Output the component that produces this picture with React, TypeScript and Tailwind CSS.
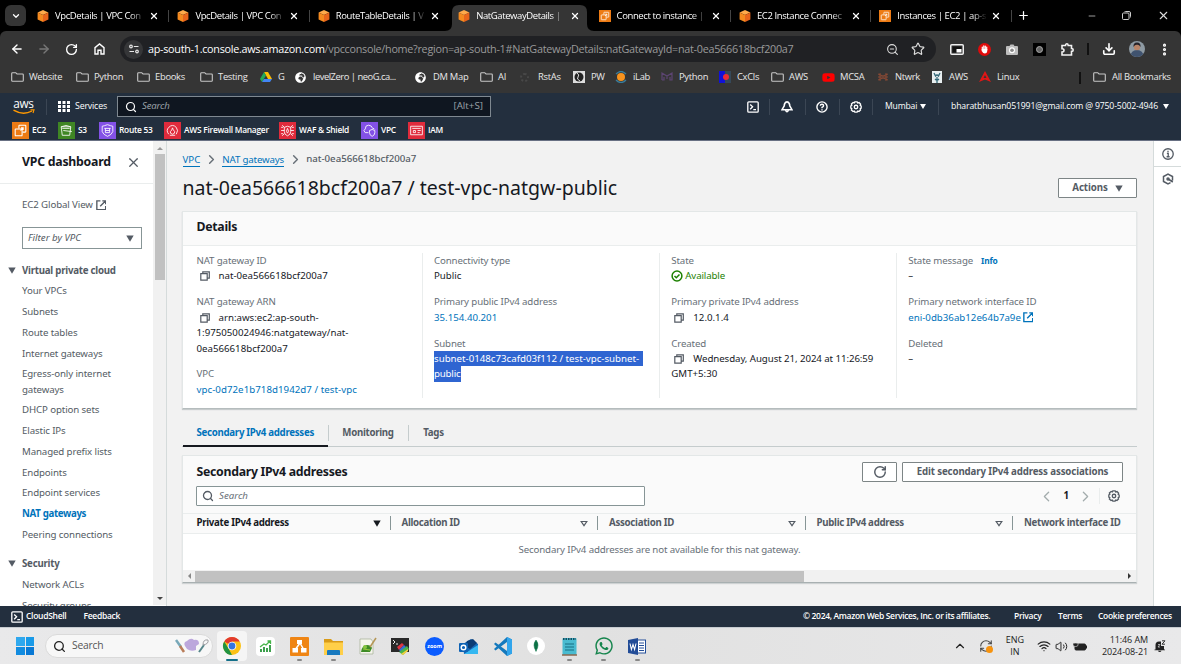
import React from 'react';
import {
  ArrowLeft, ArrowRight, RotateCw, Star, ZoomOut, Download, EllipsisVertical, Search,
  X, Plus, Minus, ChevronDown, ChevronRight, ChevronLeft, ChevronUp, Wifi, Volume2, RefreshCw,
} from 'lucide-react';
import { FaWhatsapp, FaGlobeAfrica, FaYoutube } from 'react-icons/fa';

type Kids = { children?: React.ReactNode };

const Cube = () => (
  <svg className="h-3 w-3 shrink-0" viewBox="0 0 12 12">
    <path d="M6 0 11.4 2.5 6 5 .6 2.5Z" fill="#ffa94a" />
    <path d="M.6 2.5 6 5V12L.6 9.4Z" fill="#f58a1f" />
    <path d="M11.4 2.5 6 5V12l5.400-2.600Z" fill="#e8641b" />
  </svg>
);

const Ec2Glyph = () => (
  <g fill="none" stroke="#fff" strokeWidth="1">
    <rect x="3" y="6.500" width="6.500" height="6.500" rx=".6" />
    <path d="M6.500 6V3.500Q6.500 3 7 3H12.500Q13 3 13 3.500V9Q13 9.500 12.500 9.500H10M8 8 10.500 5.500M8.500 5.500H10.500V7.500" />
  </g>
);

const Ec2Tab = () => (
  <svg className="h-3 w-3 shrink-0" viewBox="0 0 16 16">
    <rect width="16" height="16" fill="#ed7b14" />
    <Ec2Glyph />
  </svg>
);

const tabs = [
  { t: 'VpcDetails | VPC Con', ec2: false },
  { t: 'VpcDetails | VPC Con', ec2: false },
  { t: 'RouteTableDetails | V', ec2: false },
  { t: 'NatGatewayDetails |', ec2: false, active: true },
  { t: 'Connect to instance |', ec2: true },
  { t: 'EC2 Instance Connec', ec2: false },
  { t: 'Instances | EC2 | ap-s', ec2: true },
];

function TabStrip() {
  return (
    <div className="flex h-[31px] bg-black text-[9.5px] text-white">
      <div className="w-[31px] shrink-0 pl-[5px] pt-[5px]">
        <div className="flex h-[21px] w-[21px] items-center justify-center rounded-[6px] bg-[#353535]">
          <ChevronDown size={10} strokeWidth={3} />
        </div>
      </div>
      {tabs.map((t, i) => (
        <div key={i} className="relative flex w-[140.4px] shrink-0 items-center pl-[6px]">
          {t.active && (
            <svg className="absolute left-[-7px] top-[5px] h-[26px] w-[149px]" viewBox="0 0 149 26">
              <path d="M0 26Q7 26 7 19V7Q7 0 14 0H135Q142 0 142 7V19Q142 26 149 26Z" fill="#353535" />
            </svg>
          )}
          <span className="relative flex">{t.ec2 ? <Ec2Tab /> : <Cube />}</span>
          <div className="relative ml-[6px] w-[91px] whitespace-nowrap pt-px tracking-[-0.042em] [mask-image:linear-gradient(to_right,black_82%,transparent_99%)]">
            {t.t}
          </div>
          <X className="relative ml-[3px]" size={10} strokeWidth={3} />
          {i !== 2 && i !== 3 && i !== 6 && <div className="absolute right-[2px] top-[10px] h-3 w-px bg-[#444]" />}
        </div>
      ))}
      <div className="flex items-center">
        <div className="ml-[-3px] h-3 w-px bg-[#444]" />
        <Plus className="ml-[5px]" size={13} strokeWidth={2.3} />
      </div>
      <div className="ml-auto flex items-center pr-[11px]">
        <Minus size={10} className="mr-[25px] text-[#bbb]" strokeWidth={2} />
        <svg className="mr-[26px] h-[9px] w-[9px]" viewBox="0 0 9 9" fill="none" stroke="#ccc">
          <rect x=".5" y="2" width="6.500" height="6.500" rx="1" />
          <path d="M2.500 1Q2.500.5 3.500.5H7Q8.500.5 8.500 2V5.500Q8.500 6.500 8 6.500" />
        </svg>
        <X size={13} strokeWidth={2} className="text-[#ddd]" />
      </div>
    </div>
  );
}

function Toolbar() {
  return (
    <div className="flex h-9 items-center rounded-t-[6px] bg-[#353535] text-white">
      <div className="flex w-[120px] shrink-0 items-center pl-[10px]">
        <ArrowLeft size={14} strokeWidth={2.4} />
        <ArrowRight size={14} strokeWidth={2.4} className="ml-[13px] text-[#777]" />
        <RotateCw size={13} strokeWidth={2.5} className="ml-[14px]" />
        <svg className="ml-[16px] h-[12px] w-[11px]" viewBox="0 0 11 12" fill="none" stroke="#fff" strokeWidth="1.400">
          <path d="M1 11V4.700L5.500 1 10 4.700V11H7V7.200H4V11Z" />
        </svg>
      </div>
      <div className="flex h-[26px] w-[816px] shrink-0 items-center rounded-full bg-[#202124] pl-[4px]">
        <div className="flex h-[19px] w-[19px] items-center justify-center rounded-full bg-[#353638]">
          <svg className="h-[10px] w-[10px]" viewBox="0 0 10 10" fill="none" stroke="#e8e8e8" strokeWidth="1.200">
            <circle cx="2" cy="2.500" r="1.300" />
            <path d="M4.800 2.500H9.500M.5 7.500H5" />
            <circle cx="8" cy="7.500" r="1.300" />
          </svg>
        </div>
        <div className="ml-[5px] w-[736px] whitespace-nowrap text-[10.8px] tracking-[-0.026em] text-[#9a9a9a]">
          <span className="text-white">ap-south-1.console.aws.amazon.com</span>
          <span>/vpcconsole/home?region=ap-south-1#NatGatewayDetails:natGatewayId=nat-0ea566618bcf200a7</span>
        </div>
        <ZoomOut size={13} strokeWidth={2} className="ml-[2px] shrink-0 text-[#ddd]" />
        <Star size={14} strokeWidth={2} className="ml-[12px] shrink-0 text-[#ddd]" />
      </div>
      <div className="flex flex-1 items-center">
        <svg className="ml-[14px] h-[11px] w-[14px]" viewBox="0 0 14 11">
          <rect x=".75" y=".75" width="12.500" height="9.500" rx="1" fill="none" stroke="#eee" strokeWidth="1.500" />
          <rect x="2.500" y="2.500" width="9" height="6" fill="#111" />
          <rect x="6.500" y="5" width="5" height="3.500" fill="#fff" />
        </svg>
        <svg className="ml-[14px] h-[13px] w-[13px]" viewBox="0 0 13 13">
          <circle cx="6.500" cy="6.500" r="6.500" fill="#e00b0b" />
          <path d="M4.300 7V4M5.800 6V2.800M7.300 6V3M8.700 6.500V4" stroke="#fff" strokeWidth="1.200" strokeLinecap="round" />
          <path d="M3.700 6H9.300V8Q9 10.500 6.800 10.500 5 10.500 3.700 8Z" fill="#fff" />
        </svg>
        <svg className="ml-[15px] h-[11px] w-[12px]" viewBox="0 0 12 11">
          <path d="M1 2H3.500L4.500.5H7.500L8.500 2H11Q12 2 12 3V10Q12 11 11 11H1Q0 11 0 10V3Q0 2 1 2Z" fill="#bdbdbd" />
          <circle cx="6" cy="6.300" r="3" fill="#fff" /><circle cx="6" cy="6.300" r="1.800" fill="#888" />
        </svg>
        <div className="ml-[15px] flex h-[13px] w-[13px] items-center justify-center bg-black">
          <div className="h-[7px] w-[7px] rounded-full border border-[#aaa] bg-[#666]" />
        </div>
        <svg className="ml-[15px] h-[13px] w-[13px]" viewBox="0 0 13 13" fill="none" stroke="#f2f2f2" strokeWidth="1.600">
          <path d="M1 2.500H4.500Q4.500.8 5.800.8T7.200 2.500H10.500V5.500Q12.200 5.500 12.200 6.900T10.500 8.400V12H1V9Q3 9 3 7.300T1 5.700Z" />
        </svg>
        <div className="ml-[13px] h-3 w-[2px] bg-[#111]" />
        <Download size={14} strokeWidth={2.8} className="ml-[13px]" />
        <svg className="ml-[13px] h-4 w-4" viewBox="0 0 16 16">
          <clipPath id="face"><circle cx="8" cy="8" r="8" /></clipPath>
          <g clipPath="url(#face)">
            <rect width="16" height="16" fill="#8e9aa3" />
            <path d="M1 16Q2 9 8 9T15 16Z" fill="#40536f" />
            <circle cx="8" cy="6" r="3.200" fill="#b98468" />
            <path d="M4.500 6Q4 1.500 8 1.500T11.500 6Q10 3.500 8 3.800 6 3.500 4.500 6" fill="#262329" />
          </g>
        </svg>
        <EllipsisVertical size={15} strokeWidth={3} className="ml-[12px]" />
      </div>
    </div>
  );
}

const Fold = () => (
  <svg className="h-[10px] w-[13px]" viewBox="0 0 13 10" fill="none" stroke="#c8c8c8" strokeWidth="1.100">
    <path d="M.7 8.500V1.500Q.7.7 1.500.7H4.700L6 2H11.500Q12.300 2 12.300 2.800V8.500Q12.300 9.300 11.500 9.300H1.500Q.7 9.300.7 8.500Z" />
  </svg>
);
const Globe = () => <FaGlobeAfrica size={11} className="ml-px text-white" />;
const bookmarks: { t: string; w: string; i: React.ReactNode }[] = [
  { t: 'Website', w: 'w-[65px]', i: <Fold /> },
  { t: 'Python', w: 'w-[61px]', i: <Fold /> },
  { t: 'Ebooks', w: 'w-[63px]', i: <Fold /> },
  { t: 'Testing', w: 'w-[60px]', i: <Fold /> },
  { t: 'G', w: 'w-[36px]', i: (
    <svg className="h-3 w-3" viewBox="0 0 12 12"><path d="M4 1H8L12 8H8Z" fill="#fbbc04" /><path d="M4 1 6 4.500 2 11 0 8Z" fill="#22a85a" /><path d="M4 8H12L10 11H2Z" fill="#4285f4" /></svg>) },
  { t: 'levelZero | neoG.ca...', w: 'w-[119px]', i: <span className="ml-[-2px] flex"><Globe /></span> },
  { t: 'DM Map', w: 'w-[65px]', i: <span className="ml-[-1px] flex"><Globe /></span> },
  { t: 'AI', w: 'w-[40px]', i: <Fold /> },
  { t: 'RstAs', w: 'w-[53px]', i: <div className="h-[9px] w-[9px] rounded-full border-2 border-dotted border-[#484848]" /> },
  { t: 'PW', w: 'w-[42px]', i: (
    <svg className="h-3 w-3" viewBox="0 0 12 12"><rect width="12" height="12" fill="#ddd" /><circle cx="6" cy="6" r="4.500" fill="#222" /><path d="M4 2Q7 4 5 6T7 10" stroke="#ddd" fill="none" /></svg>) },
  { t: 'iLab', w: 'w-[46px]', i: (
    <svg className="h-3 w-3" viewBox="0 0 12 12"><circle cx="6" cy="6" r="4" fill="#f7931e" /><path d="M1 3Q6-2 11 3M1 9Q6 14 11 9" stroke="#397d9c" strokeWidth="1.300" fill="none" /></svg>) },
  { t: 'Python', w: 'w-[58px]', i: (
    <svg className="h-3 w-3" viewBox="0 0 12 12"><path d="M1 9V2L6 5 11 2V9H9V6M1 9H3V6M6 5V8" stroke="#5d4573" fill="none" strokeWidth="1.200" /></svg>) },
  { t: 'CxCls', w: 'w-[52px]', i: (
    <svg className="h-3 w-3" viewBox="0 0 12 12"><rect width="6" height="12" fill="#1111d8" /><rect x="6" width="6" height="12" fill="#35495a" /><circle cx="7" cy="6" r="3" fill="#ec2c35" /></svg>) },
  { t: 'AWS', w: 'w-[51px]', i: <Fold /> },
  { t: 'MCSA', w: 'w-[55px]', i: <FaYoutube size={13} className="text-[#f00]" /> },
  { t: 'Ntwrk', w: 'w-[54px]', i: (
    <svg className="h-3 w-3" viewBox="0 0 12 12"><path d="M1 3 6 5 11 3M1 9 6 7 11 9M3 2V10M9 2V10M1 6H11" stroke="#8b4a34" fill="none" strokeWidth="1" /></svg>) },
  { t: 'AWS', w: 'w-[48px]', i: (
    <svg className="h-3 w-3" viewBox="0 0 12 12"><rect x="1" width="10" height="12" fill="#e9eff0" /><path d="M3 2 4.500 5Q6 3 7.500 5L9 2M6 6V12M4 8Q6 10 8 8" stroke="#336878" fill="none" strokeWidth="1.300" /></svg>) },
  { t: 'Linux', w: 'w-[98px]', i: (
    <svg className="h-3 w-3" viewBox="0 0 12 12"><path d="M6 0 12 11 6 8.500 0 11Z" fill="#e01616" /><path d="M6 4 7.500 7H4.500Z" fill="#353535" /></svg>) },
];

function Bookmarks() {
  return (
    <div className="flex h-[26px] items-center bg-[#353535] pb-[5px] pl-[11px] text-[9.4px] tracking-[-0.03em] text-[#e8e8e8]">
      {bookmarks.map((b, i) => (
        <div key={i} className={`flex shrink-0 items-center ${b.w}`}>
          <span className="flex w-[18px] shrink-0">{b.i}</span>
          <span className={`whitespace-nowrap ${i === 5 ? 'ml-[-1px] tracking-[-0.05em]' : ''}`}>{b.t}</span>
        </div>
      ))}
      <div className="ml-[2px] h-3 w-[2px] bg-[#111]" />
      <div className="ml-[12px] flex items-center gap-[6px] whitespace-nowrap"><Fold />All Bookmarks</div>
    </div>
  );
}

const Tri = ({ c = '#545b64', hollow = false }: { c?: string; hollow?: boolean }) => (
  <svg className="h-[7px] w-[8px] shrink-0" viewBox="0 0 8 7">
    <path d={hollow ? 'M1.200 1.500H6.800L4 5.700Z' : 'M.3.5H7.700L4 6.700Z'} fill={hollow ? 'none' : c} stroke={hollow ? c : 'none'} strokeWidth="1.200" />
  </svg>
);

const Gear = ({ c, k = 'h-[13px] w-[13px]' }: { c: string; k?: string }) => (
  <svg className={`${k} shrink-0`} viewBox="0 0 13 13" fill="none" stroke={c} strokeWidth="1.400">
    <path d="M5.200.9H7.800L8.300 2.100 9.800 1.700 11.500 3.500 11 4.700 12.100 5.500V7.700L11 8.400 11.400 9.700 9.700 11.400 8.400 10.900 7.700 12.100H5.200L4.600 10.900 3.300 11.400 1.500 9.700 2 8.400.9 7.700V5.300L2 4.600 1.500 3.300 3.400 1.600 4.600 2.100Z" />
    <circle cx="6.500" cy="6.500" r="1.900" />
  </svg>
);

const Shell = () => (
  <svg className="h-3 w-3 shrink-0" viewBox="0 0 12 12" fill="none" stroke="#fff" strokeWidth="1.300">
    <rect x=".8" y=".8" width="10.400" height="10.400" rx="1" />
    <path d="M3.200 3.500 5.600 5.800 3.200 8.200M6.300 8.600H9" />
  </svg>
);

const favs: { t: string; w: string; bg: string; g: React.ReactNode }[] = [
  { t: 'EC2', w: 'w-[46px]', bg: '#ed7b14', g: <Ec2Glyph /> },
  { t: 'S3', w: 'w-[41px]', bg: '#3f8624', g: <path d="M3 4.500H12L11 12.500H4ZM3 4.500Q7.500 2 12 4.500M5 8 13 9M4 6H11" /> },
  { t: 'Route 53', w: 'w-[65px]', bg: '#8351e6', g: <path d="M3 4 5 3.500 8 2.500 11 3.500 13 4V9Q12 12 8 13.500 4 12 3 9ZM5 6H11M6 8H10M6 10H10M6 6V10M10 6V10" /> },
  { t: 'AWS Firewall Manager', w: 'w-[115px]', bg: '#e02b3c', g: <path d="M4.500 11.500Q1.500 8 4.500 5Q8 1.500 11.500 5Q14 8 11.500 11.500M5.500 12.500H10.500M8 5.500Q8.500 7.500 10 9 10.500 11 8 11.500 5.500 11 6 9Q7.500 8 8 5.500" /> },
  { t: 'WAF & Shield', w: 'w-[82px]', bg: '#e02b3c', g: <path d="M5 5Q8 3 11 5V9Q11 12 8 13 5 12 5 9ZM3 3 5 5M13 3 11 5M2 8H5M11 8H14M3 13 5 11M13 13 11 11M8 6Q6 9 8 10.500 10 9 8 6M2 5H4M12 5H14M2 11H4M12 11H14" /> },
  { t: 'VPC', w: 'w-[47px]', bg: '#8351e6', g: <path d="M7 10H4Q1.500 8 4 6.500 4 3 7 3T11 6Q12.500 6 13 7M8 8 10.500 7 13 8V10Q13 12.500 10.500 13.500 8 12.500 8 10Z" /> },
  { t: 'IAM', w: 'w-[50px]', bg: '#e02b3c', g: <path d="M2.500 4H13.500V12H2.500ZM4 6H12M5 8H7V10H5ZM9 8H12M9 10H11" /> },
];

const Divider = ({ k }: { k: string }) => <div className={`h-[16px] w-px shrink-0 bg-[#3b4654] ${k}`} />;

function AwsHeader() {
  return (
    <div className="h-[47px] bg-[#232f3e] text-white">
      <div className="flex h-[27px] items-center pl-[12px]">
        <div className="flex w-[23px] shrink-0 flex-col items-center">
          <span className="text-[11.8px] font-medium leading-[9px] tracking-[-0.03em]">aws</span>
          <svg className="mt-[1px] h-[6px] w-[22px]" viewBox="0 0 22 6" fill="none" stroke="#f90">
            <path d="M.5 1.200Q10 6.800 19 2" strokeWidth="1.400" />
            <path d="M17.500.9 21 .9 20 4" strokeWidth="1.100" />
          </svg>
        </div>
        <Divider k="ml-[11px]" />
        <svg className="ml-[11px] h-[11px] w-[12px] shrink-0" viewBox="0 0 12 11" fill="#fff">
          {[0, 4.5, 9].map((x) => [0, 4, 8].map((y) => <rect key={`${x}${y}`} x={x} y={y} width="3" height="3" />))}
        </svg>
        <span className="ml-[5px] w-[42px] whitespace-nowrap text-[8.8px] font-medium tracking-[-0.02em]">Services</span>
        <div className="flex h-[21px] w-[374px] shrink-0 items-center border border-[#7f8890] bg-[#0f1620] px-[7px]">
          <Search size={12} strokeWidth={2.4} />
          <span className="ml-[5px] text-[9.6px] italic tracking-[-0.02em] text-[#a0a8ae]">Search</span>
          <span className="ml-auto text-[9.8px] text-[#9ba3a9]">[Alt+S]</span>
        </div>
        <div className="ml-auto flex items-center">
          <Shell />
          <Divider k="ml-[10px]" />
          <svg className="ml-[11px] h-[12px] w-[12px]" viewBox="0 0 12 12" fill="none" stroke="#fff" strokeWidth="1.500">
            <path d="M6 .8Q8.800 1.500 8.800 5L11 8.700H1L3.200 5Q3.200 1.500 6 .8M4.500 9Q6 12.500 7.500 9" />
          </svg>
          <Divider k="ml-[12px]" />
          <svg className="ml-[10px] h-[12px] w-[12px]" viewBox="0 0 12 12" fill="none" stroke="#fff" strokeWidth="1.400">
            <circle cx="6" cy="6" r="5.100" />
            <path d="M4.300 4.700Q4.400 3.200 6 3.200T7.600 4.700Q7.600 5.500 6 6.400V7.200M6 8.200V9.400" />
          </svg>
          <Divider k="ml-[11px]" />
          <span className="ml-[10px] flex"><Gear c="#fff" k="h-[12px] w-[12px]" /></span>
          <Divider k="ml-[10px]" />
          <div className="ml-[12px] flex w-[54px] items-center whitespace-nowrap text-[8.6px] font-medium tracking-[-0.018em]">
            <span>Mumbai</span>
            <svg className="ml-auto mr-[13px] h-[5px] w-[6px] shrink-0" viewBox="0 0 6 5"><path d="M0 0H6L3 5Z" fill="#fff" /></svg>
          </div>
          <Divider k="ml-[-1px]" />
          <div className="ml-[12px] flex items-center whitespace-nowrap text-[8.7px] font-medium tracking-[-0.018em]">
            <span className="w-[208px]">bharatbhusan051991@gmail.com @ 9750-5002-4946</span>
            <svg className="ml-[4px] mr-[12px] h-[5px] w-[6px]" viewBox="0 0 6 5"><path d="M0 0H6L3 5Z" fill="#fff" /></svg>
          </div>
        </div>
      </div>
      <div className="flex h-[20px] items-center pl-[12px] text-[8.4px] font-semibold">
        {favs.map((f) => (
          <div key={f.t} className={`flex shrink-0 items-center whitespace-nowrap tracking-[-0.03em] ${f.w}`}>
            <svg className="mr-[3px] h-[17px] w-[17px] shrink-0" viewBox="0 0 16 16" fill="none" stroke="#fff" strokeWidth=".8">
              <rect width="16" height="16" fill={f.bg} stroke="none" />
              {f.g}
            </svg>
            {f.t}
          </div>
        ))}
      </div>
    </div>
  );
}

const External = ({ c = '#545b64' }: { c?: string }) => (
  <svg className="h-[10.500px] w-[10.500px] shrink-0" viewBox="0 0 10 10" fill="none" stroke={c} strokeWidth="1.300">
    <path d="M4.200.8H.8V9.200H9.200V5.800M6 .8H9.200V4M9 1 4 6" />
  </svg>
);

const NavItem = ({ children, active }: Kids & { active?: boolean }) => (
  <div className={`mt-[5.350px] pl-[22px] leading-[15.4px] ${active ? 'font-bold tracking-[-0.035em] text-[#0073bb]' : 'tracking-[-0.012em]'}`}>{children}</div>
);
const NavHead = ({ children }: Kids) => (
  <div className="flex items-center pl-[8px] font-bold leading-[15.4px] tracking-[-0.025em]">
    <span className="mr-[6px] flex"><Tri /></span>
    {children}
  </div>
);

function SideNav() {
  return (
    <div className="flex w-[167px] shrink-0 border-r border-[#d5dbdb] bg-white text-[9.7px] text-[#545b64]">
      <div className="h-[465px] w-[153px] shrink-0 overflow-hidden">
        <div className="flex h-[43px] items-center border-b border-[#eaeded] pl-[22px] text-[12.3px] font-bold text-[#16191f]">
          <span className="w-[104px] whitespace-nowrap tracking-[-0.02em]">VPC dashboard</span>
          <X size={15} strokeWidth={2} className="text-[#545b64]" />
        </div>
        <div className="flex items-center gap-[3px] pl-[22px] pt-[13px] leading-[16px] tracking-[-0.012em]">EC2 Global View <External /></div>
        <div className="ml-[22px] mt-[14px] flex h-[22px] w-[120px] items-center border border-[#879596] px-[5px]">
          <span className="italic">Filter by VPC</span>
          <span className="ml-auto mr-[2px] flex"><Tri /></span>
        </div>
        <div className="mt-[13.500px]">
          <NavHead>Virtual private cloud</NavHead>
          <NavItem>Your VPCs</NavItem>
          <NavItem>Subnets</NavItem>
          <NavItem>Route tables</NavItem>
          <NavItem>Internet gateways</NavItem>
          <NavItem>Egress-only internet<br />gateways</NavItem>
          <NavItem>DHCP option sets</NavItem>
          <NavItem>Elastic IPs</NavItem>
          <NavItem>Managed prefix lists</NavItem>
          <NavItem>Endpoints</NavItem>
          <NavItem>Endpoint services</NavItem>
          <NavItem active>NAT gateways</NavItem>
          <NavItem>Peering connections</NavItem>
        </div>
        <div className="mt-[13.800px]">
          <NavHead>Security</NavHead>
          <NavItem>Network ACLs</NavItem>
          <NavItem>Security groups</NavItem>
        </div>
      </div>
      <div className="flex h-[464px] w-[13px] flex-col items-center bg-[#f1f1f1]">
        <svg className="mt-[6px] h-[3px] w-[6px]" viewBox="0 0 6 3"><path d="M0 3H6L3 0Z" fill="#999" /></svg>
        <div className="mt-[4px] h-[126px] w-[10px] bg-[#c1c1c1]" />
        <svg className="mb-[5px] mt-auto h-[3px] w-[6px]" viewBox="0 0 6 3"><path d="M0 0H6L3 3Z" fill="#444" /></svg>
      </div>
    </div>
  );
}

const Field = ({ label, children }: Kids & { label: React.ReactNode }) => (
  <div className="mb-[10.500px] leading-[15.4px]">
    <div className="whitespace-nowrap tracking-[-0.013em] text-[#687078]">{label}</div>
    <div className="text-[#16191f]">{children}</div>
  </div>
);
const CopyIcon = () => (
  <svg className="ml-[3px] mr-[9px] inline h-[10px] w-[10px] align-[-2px]" viewBox="0 0 10 10" fill="none" stroke="#545b64" strokeWidth="1.200">
    <path d="M2.800 2.500V.8H9.300V7.200H7.500M.8 2.700H7.200V9.200H.8Z" />
  </svg>
);
const Link = ({ children }: Kids) => <span className="whitespace-nowrap text-[#0073bb]">{children}</span>;

function Details() {
  return (
    <div className="h-[198px] w-[955px] border border-[#e3e7e7] border-b-[#b5bcbd] bg-white shadow-[0_1px_1px_rgba(0,28,36,0.18)]">
      <div className="flex h-[34px] items-center border-b border-[#eaeded] bg-[#fafafa] pb-[2px] pl-[13.500px] text-[12.3px] font-bold tracking-[-0.022em] text-[#16191f]">Details</div>
      <div className="mt-[7px] flex h-[145px] text-[9.7px]">
        <div className="w-[240px] border-r border-[#eaeded] pl-[13.500px]">
          <Field label="NAT gateway ID"><CopyIcon />nat-0ea566618bcf200a7</Field>
          <Field label="NAT gateway ARN"><CopyIcon />arn:aws:ec2:ap-south-<br />1:975050024946:natgateway/nat-<br />0ea566618bcf200a7</Field>
          <Field label="VPC"><span className="tracking-[0.005em]"><Link>vpc-0d72e1b718d1942d7 / test-vpc</Link></span></Field>
        </div>
        <div className="w-[237.300px] border-r border-[#eaeded] pl-[11px]">
          <Field label="Connectivity type">Public</Field>
          <Field label="Primary public IPv4 address"><Link>35.154.40.201</Link></Field>
          <Field label="Subnet">
            <div className="w-[209px] whitespace-nowrap bg-[#2f65d1] text-white">subnet-0148c73cafd03f112 / test-vpc-subnet-</div>
            <div className="w-[27px] whitespace-nowrap bg-[#2f65d1] tracking-[-0.02em] text-white">public</div>
          </Field>
        </div>
        <div className="w-[237px] border-r border-[#eaeded] pl-[11px]">
          <Field label="State">
            <span className="flex items-center gap-[2px] text-[#1d8102]">
              <svg className="h-[12px] w-[12px]" viewBox="0 0 12 12" fill="none" stroke="#1d8102" strokeWidth="1.500"><circle cx="6" cy="6" r="4.900" /><path d="M3.500 6 5.300 7.800 8.500 4.500" /></svg>
              <span className="tracking-[-0.013em]">Available</span>
            </span>
          </Field>
          <Field label="Primary private IPv4 address"><CopyIcon />12.0.1.4</Field>
          <Field label="Created"><CopyIcon /><span className="whitespace-nowrap tracking-[-0.008em]">Wednesday, August 21, 2024 at 11:26:59</span><br />GMT+5:30</Field>
        </div>
        <div className="pl-[11px]">
          <Field label={<>State message<span className="ml-[8px] text-[8.4px] font-bold tracking-[-0.02em] text-[#0073bb]">Info</span></>}>–</Field>
          <Field label="Primary network interface ID"><span className="flex items-center gap-[2px]"><Link>eni-0db36ab12e64b7a9e</Link><External c="#0073bb" /></span></Field>
          <Field label="Deleted">–</Field>
        </div>
      </div>
    </div>
  );
}

const Th = ({ children, w, dark, last }: Kids & { w: string; dark?: boolean; last?: boolean }) => (
  <div className={`flex shrink-0 items-center whitespace-nowrap ${w} ${dark ? 'text-[#16191f]' : ''}`}>
    {children}
    {!last && <span className="ml-auto mr-[9px] flex"><Tri c={dark ? '#16191f' : '#545b64'} hollow={!dark} /></span>}
    {!last && <span className="mr-[11px] h-[14px] w-px bg-[#879596]" />}
  </div>
);

function TableCard() {
  return (
    <div className="mt-[8px] h-[128px] w-[955px] border border-[#e3e7e7] border-b-[#a8b0b1] bg-white text-[9.7px] text-[#545b64] shadow-[0_1px_1px_rgba(0,28,36,0.15)]">
      <div className="h-[58px] border-b border-[#eaeded] bg-[#fafafa] pl-[13px] pr-[13px] pt-[6px]">
        <div className="flex h-[20px] items-center">
          <span className="ml-[.5px] text-[12.3px] font-bold tracking-[-0.024em] text-[#16191f]">Secondary IPv4 addresses</span>
          <div className="ml-auto flex h-[20px] w-[35px] items-center justify-center rounded-[1px] border border-[#7d8586] bg-white">
            <RotateCw size={14} strokeWidth={2.5} />
          </div>
          <div className="ml-[5px] flex h-[20px] w-[221px] items-center justify-center whitespace-nowrap rounded-[1px] border border-[#7d8586] bg-white font-bold tracking-[-0.013em]">Edit secondary IPv4 address associations</div>
        </div>
        <div className="mt-[4px] flex h-[20px] items-center">
          <div className="flex h-[20px] w-[449px] items-center rounded-[1px] border border-[#879596] bg-white pl-[5px]">
            <Search size={12} strokeWidth={2.6} />
            <span className="ml-[5px] italic text-[#687078]">Search</span>
          </div>
          <ChevronLeft size={17} strokeWidth={1.8} className="ml-auto text-[#a3acad]" />
          <span className="mx-[8px] font-bold text-[#16191f]">1</span>
          <ChevronRight size={17} strokeWidth={1.8} className="text-[#a3acad]" />
          <div className="ml-[5px] h-4 w-px bg-[#eaeded]" />
          <span className="ml-[8px] mr-[3px] flex"><Gear c="#545b64" k="h-[12px] w-[12px]" /></span>
        </div>
      </div>
      <div className="flex h-[20px] items-center overflow-hidden border-b border-[#eaeded] bg-[#fafafa] pl-[13.500px] font-bold tracking-[-0.03em]">
        <Th w="w-[205px]" dark>Private IPv4 address</Th>
        <Th w="w-[207.500px]">Allocation ID</Th>
        <Th w="w-[207.500px]">Association ID</Th>
        <Th w="w-[207.500px]">Public IPv4 address</Th>
        <Th w="w-[100px]" last>Network interface ID</Th>
      </div>
      <div className="flex h-[36px] items-center justify-center pb-[3px] tracking-[-0.015em] text-[#687078]">Secondary IPv4 addresses are not available for this nat gateway.</div>
      <div className="flex h-[12px] items-center bg-[#f1f1f1]">
        <svg className="ml-[5px] h-[6px] w-[3px]" viewBox="0 0 3 6"><path d="M3 0V6L0 3Z" fill="#888" /></svg>
        <div className="ml-[4px] h-[11px] w-[609px] bg-[#c1c1c1]" />
        <svg className="ml-auto mr-[5px] h-[6px] w-[3px]" viewBox="0 0 3 6"><path d="M0 0V6L3 3Z" fill="#333" /></svg>
      </div>
    </div>
  );
}

function Main() {
  return (
    <div className="w-[986px] shrink-0 bg-[#f2f2f2] pl-[15px]">
      <div className="flex h-[37px] items-center pl-[.5px] text-[9.7px]">
        <span className="border-b border-[#0073bb] leading-[13px] text-[#0073bb]">VPC</span>
        <ChevronRight size={15} strokeWidth={2.3} className="mx-[3.500px] text-[#687078]" />
        <span className="border-b border-[#0073bb] leading-[13px] tracking-[-0.015em] text-[#0073bb]">NAT gateways</span>
        <ChevronRight size={15} strokeWidth={2.3} className="mx-[3.500px] text-[#687078]" />
        <span className="font-medium text-[#545b64]">nat-0ea566618bcf200a7</span>
      </div>
      <div className="flex h-[33px] items-start">
        <h1 className="ml-[.5px] whitespace-nowrap text-[19.500px] leading-[20px] text-[#16191f]">nat-0ea566618bcf200a7 / test-vpc-natgw-public</h1>
        <div className="ml-auto mr-[16px] flex h-[20px] w-[79px] items-center justify-center gap-[7px] rounded-[1px] border border-[#7d8586] bg-white text-[9.7px] font-bold tracking-[-0.01em] text-[#545b64]">
          Actions <Tri />
        </div>
      </div>
      <Details />
      <div className="mt-[14px] flex h-[24px] w-[955px] border-b border-[#c5cccd] text-[9.7px] font-bold tracking-[-0.03em] text-[#545b64]">
        <div className="ml-px flex h-[24px] w-[144.500px] shrink-0 justify-center border-b-2 border-[#16191f] leading-[20px] text-[#0073bb]">Secondary IPv4 addresses</div>
        <div className="mt-[2px] h-4 w-px bg-[#c5cccd]" />
        <div className="w-[79px] text-center leading-[20px]">Monitoring</div>
        <div className="mt-[2px] h-4 w-px bg-[#c5cccd]" />
        <div className="w-[50px] text-center leading-[20px]">Tags</div>
      </div>
      <TableCard />
    </div>
  );
}

function RightRail() {
  return (
    <div className="flex flex-1 flex-col items-center border-l border-[#d5dbdb] bg-white">
      <div className="flex h-[26px] w-full items-center justify-center border-b border-[#d5dbdb]">
        <svg className="h-[12px] w-[12px]" viewBox="0 0 11 11" fill="none" stroke="#545b64" strokeWidth="1.200"><circle cx="5.500" cy="5.500" r="4.800" /><path d="M5.500 2.500V3.800M4.500 5H5.700V8M4.200 8H7" /></svg>
      </div>
      <svg className="mt-[6px] h-[12px] w-[12px]" viewBox="0 0 12 12" fill="none" stroke="#545b64" strokeWidth="1.500"><path d="M10.500 7.500V3.500L6 1 1.500 3.500V8.500L6 11 8.500 9.700M5.500 5.500 10.800 9" /><circle cx="6" cy="6" r="1" /></svg>
    </div>
  );
}

const TaskIcons: React.ReactNode[] = [
  <svg className="h-[20px] w-[20px]" viewBox="0 0 20 20"><circle cx="10" cy="10" r="9" fill="#fbc116" /><path d="M10 10 2.200 5.500A9 9 0 0 1 17.800 5.500H10Z" fill="#e33b2e" /><path d="M2.200 5.500 6.500 12.500 10 19A9 9 0 0 1 2.200 5.500" fill="#229342" /><circle cx="10" cy="10" r="4.300" fill="#fff" /><circle cx="10" cy="10" r="3.400" fill="#3374e0" /></svg>,
  <svg className="h-[19px] w-[19px]" viewBox="0 0 19 19"><rect width="19" height="19" rx="4" fill="#fff" /><path d="M5 15V12M8 15V10M11 15V11M14 15V8" stroke="#28963a" strokeWidth="1.800" /><path d="M4 10 8 7 10 8 14 4M11.500 4H14.500V7" fill="none" stroke="#46b549" strokeWidth="1.300" /></svg>,
  <svg className="h-[19px] w-[19px]" viewBox="0 0 19 19"><rect width="19" height="19" rx="1" fill="#ef8514" /><path d="M10 6 5 13M10 6 14 13" stroke="#fff" strokeWidth="1.500" /><path d="M7 3H12V7H7ZM2.500 11H8V15.500H2.500ZM11 11H16.500V15.500H11Z" fill="#fff" /></svg>,
  <svg className="h-[19px] w-[19px]" viewBox="0 0 19 19"><path d="M0 2H7L9 4H19V9H0Z" fill="#d99b18" /><path d="M0 5.500H19V18H0Z" fill="#ffcf48" /><path d="M3 18V14Q3 13 4 13H15Q16 13 16 14V18Z" fill="#1879bf" /></svg>,
  <svg className="h-[19px] w-[19px]" viewBox="0 0 19 19"><path d="M2 2H13L15 5V17H2Z" fill="#f5f5ed" stroke="#a4b092" strokeWidth=".7" /><path d="M3 15Q4 8 9 8 13 8 14 11L12 15Z" fill="#3e8c26" /><circle cx="7" cy="10" r="2" fill="#86c440" /><path d="M5 12 12 13" stroke="#9ac83f" /><path d="M18 1 12 10" stroke="#b59655" strokeWidth="1.500" /></svg>,
  <svg className="h-[19px] w-[19px]" viewBox="0 0 19 19"><rect y="1" width="18" height="14" fill="#292929" /><path d="M2 3 4 5 2 7M5 7H7" stroke="#eee" fill="none" /><path d="M6 10 11 6 13 8 8 13Z" fill="#df3542" /><path d="M8 13 13 8 15 10 10 15Z" fill="#356fd6" /><path d="M8 15 16 9 18 12 12 18Z" fill="#48b44c" /><path d="M10 17 17 12V14L12 18Z" fill="#f3cf3e" /></svg>,
  <div className="flex h-[19px] w-[19px] items-center justify-center rounded-full bg-[#0b5cff] text-[5.5px] font-bold text-white">zoom</div>,
  <svg className="h-[19px] w-[19px]" viewBox="0 0 19 19"><path d="M4 7 12 2 19 7V17H5Z" fill="#1567b7" /><path d="M8 4 14 2 18 6 11 12 6 9Z" fill="#0a3c75" /><path d="M5 17 19 8V17Z" fill="#35b8f1" /><rect y="6" width="9" height="9" rx="1" fill="#0f63b5" /><circle cx="4.500" cy="10.500" r="2.300" fill="none" stroke="#fff" strokeWidth="1.400" /></svg>,
  <svg className="h-[19px] w-[19px]" viewBox="0 0 19 19"><path d="M14 0 19 2.500V16.500L14 19 1 7 2.500 5.500 14 14V5L2.500 13.500 1 12Z" fill="#1479bd" /><path d="M14 0 19 2.500V16.500L14 19Z" fill="#31a5ec" /></svg>,
  <svg className="h-[18px] w-[18px]" viewBox="0 0 18 18"><circle cx="9" cy="9" r="9" fill="#fff" /><path d="M9 3Q13 8 9 14 5 8 9 3M9 13V15" fill="#0b7145" stroke="#0b7145" strokeWidth=".5" /></svg>,
  <svg className="h-[19px] w-[17px]" viewBox="0 0 17 19"><rect x="1.500" y="1" width="14" height="17" rx="1" fill="#49bbd0" /><path d="M2 2H15" stroke="#174e61" strokeWidth="2" strokeDasharray="1.500 1" /><path d="M4 7H13M4 10H13M4 13H13" stroke="#176f83" /><path d="M1 18H16" stroke="#8a674e" strokeWidth="1.500" /></svg>,
  <FaWhatsapp size={20} className="text-[#16854d]" />,
  <svg className="h-[17px] w-[18px]" viewBox="0 0 18 17"><rect x="8" y="2" width="9.500" height="13" fill="#fff" stroke="#244f99" /><path d="M11 5H16M11 7.500H16M11 10H16M11 12.500H16" stroke="#244f99" /><path d="M0 2 10 0V17L0 15Z" fill="#224c97" /><path d="M2 5.500 3.400 11.500 5 6.500 6.600 11.500 8 5.500" stroke="#fff" strokeWidth="1.100" fill="none" /></svg>,
];
const running = [2, 3, 10, 11, 12];

function Taskbar() {
  return (
    <div className="flex h-[37px] items-center border-t border-[#c6cbd0] bg-gradient-to-r from-[#e9e9ea] via-[#e1e1e1] to-[#e9e9ea] text-[#222]">
      <div className="ml-[16px] grid h-[18px] w-[18px] shrink-0 grid-cols-2 gap-px">
        <div className="bg-[#2fa8ee]" /><div className="bg-[#199ae8]" /><div className="bg-[#128ce0]" /><div className="bg-[#0878d4]" />
      </div>
      <div className="ml-[11px] flex h-[24px] w-[168px] shrink-0 items-center rounded-full border border-[#dadada] bg-[#f7f7f7] pl-[7px]">
        <Search size={13} strokeWidth={2.4} />
        <span className="ml-[6px] text-[10.3px] tracking-[-0.02em] text-[#555]">Search</span>
        <svg className="ml-auto mr-[3px] h-[16px] w-[34px]" viewBox="0 0 34 16">
          <path d="M1 2 6 9" stroke="#79a9b9" strokeWidth="2.500" /><path d="M5 8 9 14" stroke="#b97d59" strokeWidth="2.500" />
          <path d="M10 8Q8 4 12 3 16-1 19 2 24 1 24 6L21 8V12Q16 14 12 11Z" fill="#bca7dc" />
          <path d="M24 14 29 7" stroke="#56868a" strokeWidth="2" /><path d="M28 7Q28 1 33 2 34 6 28 7Z" fill="none" stroke="#9d9da1" />
        </svg>
      </div>
      <div className="ml-[2px] flex">
        {TaskIcons.map((ic, i) => (
          <div key={i} className="flex h-[36px] w-[33.8px] flex-col items-center">
            <div className={`mt-[3px] flex h-[30px] w-[30px] items-center justify-center rounded-[4px] ${i === 0 ? 'bg-[#f5f5f5]' : ''}`}>{ic}</div>
            {i === 0 && <div className="mt-[-2px] h-[2px] w-[12px] rounded bg-[#14708a]" />}
            {running.includes(i) && <div className="mt-[-2px] h-[2px] w-[5px] rounded bg-[#888]" />}
          </div>
        ))}
      </div>
      <div className="ml-auto flex items-center">
        <ChevronUp size={14} strokeWidth={2} />
        <div className="relative ml-[12px]">
          <RefreshCw size={14} strokeWidth={1.8} className="text-[#444]" />
          <div className="absolute bottom-0 right-0 h-[7px] w-[7px] rounded-full bg-[#f7930e]" />
        </div>
        <div className="ml-[9px] w-[26px] text-center text-[9px] leading-[12px]">ENG<br />IN</div>
        <Wifi size={14} strokeWidth={2} className="ml-[9px]" />
        <Volume2 size={13} strokeWidth={1.8} className="ml-[4px]" />
        <svg className="ml-[5px] h-[11px] w-[14px]" viewBox="0 0 14 11">
          <path d="M3 3H11.500Q12.500 3 12.500 4V8Q12.500 9 11.500 9H3Q2 9 2 8V4Q2 3 3 3Z" fill="#222" stroke="#222" />
          <path d="M13.500 4.500V7.500" stroke="#222" />
          <path d="M1 .5V2.500M4 .5V2.500M0 2H5V4Q5 5.500 2.500 5.500T0 4Z" fill="#222" stroke="#e6e6e6" strokeWidth=".6" />
        </svg>
        <div className="ml-[9px] w-[52px] whitespace-nowrap text-right text-[9px] leading-[12.5px] tracking-[-0.01em]">11:46 AM<br />2024-08-21</div>
        <svg className="ml-[6px] mr-[15px] h-[12px] w-[12px]" viewBox="0 0 12 12">
          <path d="M1.500 9.500V5Q1.500 1.500 5 1.500H7V6H10V9.500H11V10.300H.5V9.500ZM4 10.800H7.500Q7 12 5.700 12T4 10.800Z" fill="#222" />
          <path d="M8 .8H11L8 4.200H11" fill="none" stroke="#222" strokeWidth=".9" />
          <path d="M4 4.500H6L4 7H6" fill="none" stroke="#ddd" strokeWidth=".7" />
        </svg>
      </div>
    </div>
  );
}

export default function App() {
  return (
    <div className="h-[664px] w-[1181px] overflow-hidden bg-black font-['Open_Sans','Noto_Sans',sans-serif]">
      <TabStrip />
      <Toolbar />
      <Bookmarks />
      <AwsHeader />
      <div className="flex h-[466px] overflow-hidden border-t border-[#687083] font-['Noto_Sans','Open_Sans',sans-serif]">
        <SideNav />
        <Main />
        <RightRail />
      </div>
      <div className="flex h-[21px] items-center bg-[#232f3e] text-[8.500px] font-semibold tracking-[-0.035em] text-white">
        <span className="ml-[11px] flex"><Shell /></span>
        <span className="ml-[3px] w-[57.500px]">CloudShell</span>
        <span>Feedback</span>
        <span className="ml-auto w-[211px] whitespace-nowrap tracking-[-0.04em]">© 2024, Amazon Web Services, Inc. or its affiliates.</span>
        <span className="w-[44px]">Privacy</span>
        <span className="w-[40px]">Terms</span>
        <span className="w-[83px] whitespace-nowrap">Cookie preferences</span>
      </div>
      <Taskbar />
    </div>
  );
}
